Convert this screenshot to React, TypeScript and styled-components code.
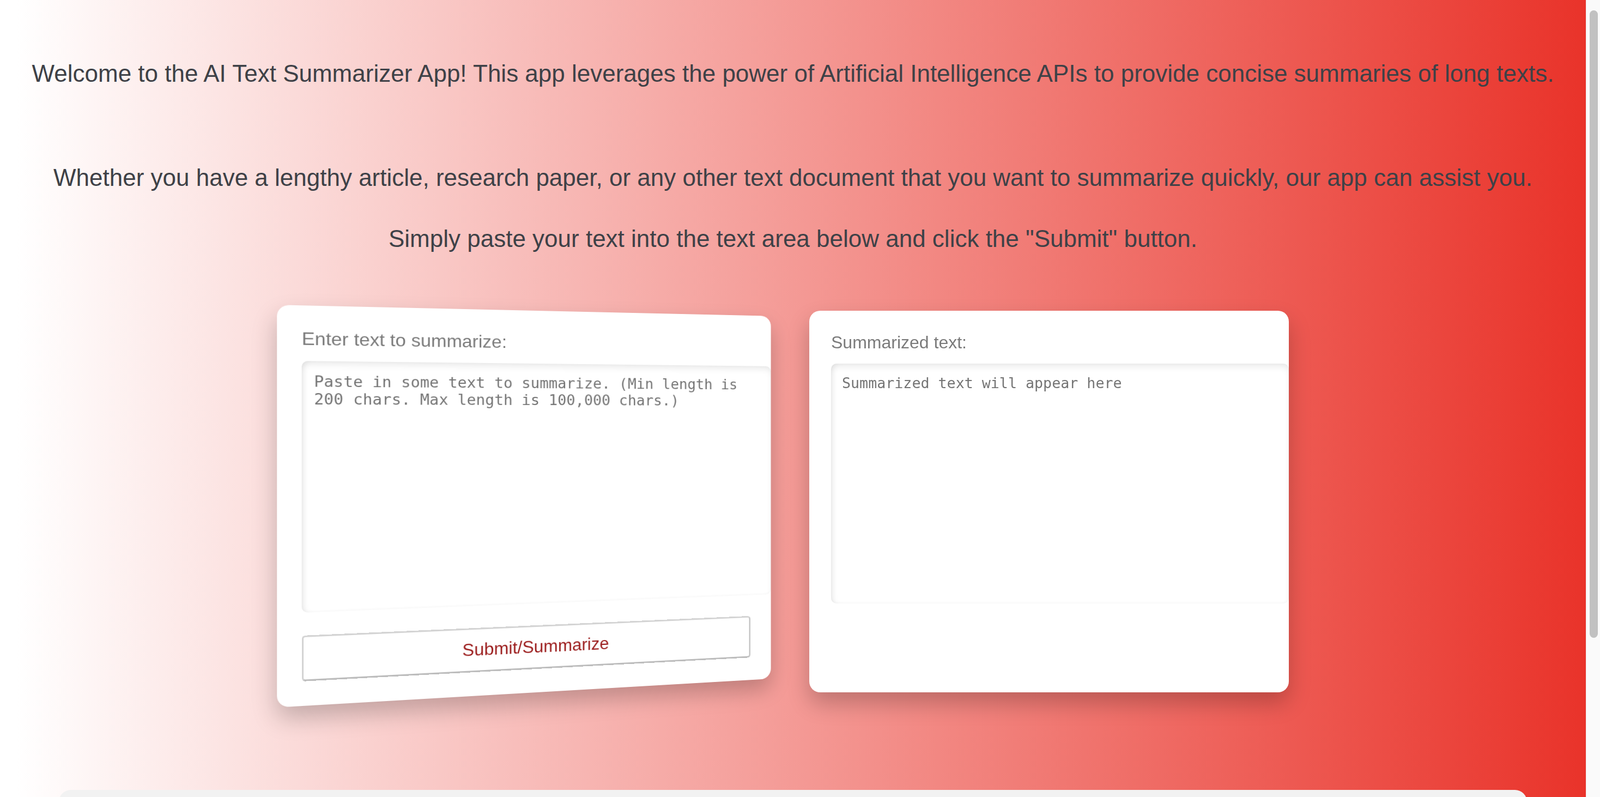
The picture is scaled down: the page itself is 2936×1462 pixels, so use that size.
import React from 'react';
import styled, { createGlobalStyle } from 'styled-components';

const GlobalStyle = createGlobalStyle`
  html,
  body {
    margin: 0;
    padding: 0;
    height: 100%;
    overflow: hidden;
  }
  body {
    font-family: 'Liberation Sans', Arial, sans-serif;
  }
  #root {
    height: 100%;
  }
`;

const Frame = styled.div`
  display: flex;
  height: 100vh;
  overflow: hidden;
`;

const Page = styled.main`
  flex: 1;
  min-width: 0;
  display: flex;
  flex-direction: column;
  overflow: hidden;
  background: linear-gradient(90deg, #ffffff 1%, #e9332a 100%);
`;

const Intro = styled.section`
  padding-top: 99px;
  text-align: center;
`;

const Lead = styled.p<{ $gap?: number }>`
  margin: 0 0 ${(p) => p.$gap ?? 40}px;
  font-size: 44px;
  line-height: 72px;
  color: #3e4147;
`;

// perspective origin sits a little above the cards' middle so the tilted card skews like the original
const CardRow = styled.div`
  display: flex;
  justify-content: center;
  gap: 60px;
  margin-top: 96px;
  perspective: 2000px;
  perspective-origin: 50% 196px;
`;

const Card = styled.div<{ $tilt?: boolean }>`
  width: 880px;
  box-sizing: border-box;
  display: flex;
  flex-direction: column;
  align-items: flex-start;
  padding: 40px 40px 43px;
  background: #ffffff;
  border-radius: 20px;
  box-shadow: 0 20px 40px rgba(0, 0, 0, 0.22);
  transform: ${(p) => (p.$tilt ? 'rotateY(13.7deg)' : 'none')};
`;

const Label = styled.label`
  font-size: 32px;
  color: #7b7b7b;
  margin-bottom: 20px;
`;

const TextBox = styled.textarea`
  box-sizing: content-box;
  width: 100%;
  height: 400px;
  margin: 0;
  padding: 20px;
  border: none;
  outline: none;
  resize: none;
  overflow: hidden;
  border-radius: 10px;
  background: #ffffff;
  box-shadow: inset 0 8px 14px -4px rgba(0, 0, 0, 0.1), inset 8px 0 12px -6px rgba(0, 0, 0, 0.08),
    inset 0 -2px 6px -2px rgba(0, 0, 0, 0.04);
  font-family: 'DejaVu Sans Mono', 'Liberation Mono', monospace;
  font-size: 26.67px;
  line-height: 31px;
  color: #555;

  &::placeholder {
    color: #757575;
  }
`;

const SubmitButton = styled.button`
  box-sizing: border-box;
  width: 100%;
  height: 80px;
  margin-top: 40px;
  background: #ffffff;
  border: 3px solid #d4d4d4;
  border-right-color: #c6c6c6;
  border-bottom-color: #bdbdbd;
  border-radius: 6px;
  font-family: 'Liberation Sans', Arial, sans-serif;
  font-size: 31px;
  color: #9b1c1c;
  cursor: pointer;
`;

const Footer = styled.div`
  flex-shrink: 0;
  height: 300px;
  margin: 179px 108px 0;
  background: #f2f2f2;
  border-radius: 22px 22px 0 0;
`;

const ScrollRail = styled.div`
  width: 26px;
  flex-shrink: 0;
  box-sizing: border-box;
  padding: 19px 4px 0 6px;
  background: #fafafa;
  border-left: 1px solid #ececec;
`;

const ScrollThumb = styled.div`
  height: 1151px;
  border-radius: 8px;
  background: #c1c1c1;
`;

export default function App() {
  return (
    <Frame>
      <GlobalStyle />
      <Page>
        <Intro>
          <Lead $gap={119}>
            Welcome to the AI Text Summarizer App! This app leverages the power of Artificial Intelligence APIs to
            provide concise summaries of long texts.
          </Lead>
          <Lead>
            Whether you have a lengthy article, research paper, or any other text document that you want to summarize
            quickly, our app can assist you.
          </Lead>
          <Lead $gap={0}>Simply paste your text into the text area below and click the "Submit" button.</Lead>
        </Intro>

        <CardRow>
          <Card $tilt>
            <Label htmlFor="source">Enter text to summarize:</Label>
            <TextBox
              id="source"
              placeholder="Paste in some text to summarize. (Min length is 200 chars. Max length is 100,000 chars.)"
            />
            <SubmitButton type="button">Submit/Summarize</SubmitButton>
          </Card>
          <Card>
            <Label htmlFor="result">Summarized text:</Label>
            <TextBox id="result" placeholder="Summarized text will appear here" readOnly />
          </Card>
        </CardRow>

        <Footer />
      </Page>
      <ScrollRail>
        <ScrollThumb />
      </ScrollRail>
    </Frame>
  );
}
